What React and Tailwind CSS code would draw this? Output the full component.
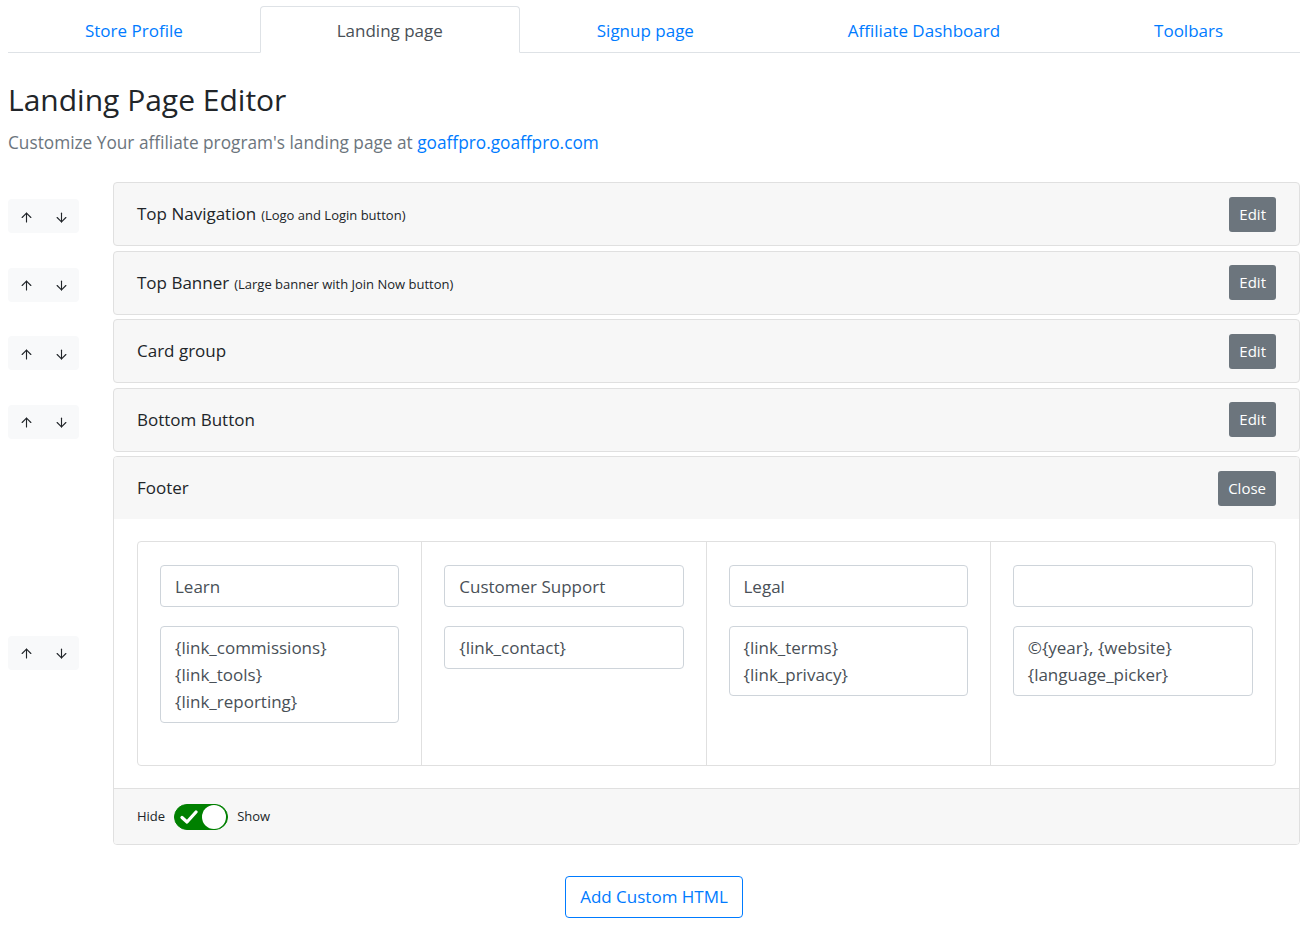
import React, { useState } from "react";
import { ArrowUp, ArrowDown } from "lucide-react";

const tabs = ["Store Profile", "Landing page", "Signup page", "Affiliate Dashboard", "Toolbars"];

const sections = [
  { title: "Top Navigation", note: "(Logo and Login button)" },
  { title: "Top Banner", note: "(Large banner with Join Now button)" },
  { title: "Card group" },
  { title: "Bottom Button" },
];

const columns = [
  { heading: "Learn", lines: ["{link_commissions}", "{link_tools}", "{link_reporting}"] },
  { heading: "Customer Support", lines: ["{link_contact}"] },
  { heading: "Legal", lines: ["{link_terms}", "{link_privacy}"] },
  { heading: "", lines: ["©{year}, {website}", "{language_picker}"] },
];

function MoveButtons() {
  return (
    <div className="w-[105px] shrink-0 pt-[4px]">
      <div className="inline-flex h-[34px] w-[71px] rounded bg-[#f8f9fa] text-[#212529]">
        <button className="flex w-1/2 items-center justify-center pl-[1px] pt-[2px]">
          <ArrowUp size={15} strokeWidth={1.8} />
        </button>
        <button className="flex w-1/2 items-center justify-center pt-[2px]">
          <ArrowDown size={15} strokeWidth={1.8} />
        </button>
      </div>
    </div>
  );
}

export default function App() {
  const [active] = useState(1);
  const [shown, setShown] = useState(true);

  return (
    <div className="min-h-screen bg-white px-2 text-[18px] text-[#212529]" style={{ fontFamily: "'Open Sans', 'Noto Sans', sans-serif" }}>
      {/* tabs */}
      <div className="mt-[6px] flex border-b border-[#dee2e6]">
        {tabs.map((t, i) => (
          <div
            key={t}
            className={
              i === active
                ? "-mb-px flex-auto rounded-t border border-[#dee2e6] border-b-white bg-white px-4 pb-[7px] pt-[11px] text-center text-[17px] leading-[26px] text-[#495057]"
                : "flex-auto border border-transparent px-4 pb-[7px] pt-[11px] text-center text-[17px] leading-[26px] text-[#007bff]"
            }
          >
            {t}
          </div>
        ))}
      </div>

      <h2 className="mt-[28px] text-[30px] leading-[38px] text-[#212529]">Landing Page Editor</h2>
      <p className="mt-[10px] text-[17.25px] leading-[27px] text-[#6c757d]">
        Customize Your affiliate program's landing page at{" "}
        <a className="text-[#007bff]">goaffpro.goaffpro.com</a>
      </p>

      <div className="mt-[26px] flex flex-col gap-[4.5px]">
        {sections.map((s) => (
          <div key={s.title} className="flex items-center">
            <MoveButtons />
            <div className="flex h-[64px] flex-1 items-center justify-between rounded border border-[#e0e0e0] bg-[#f7f7f7] pl-[23px] pr-[23px]">
              <div className="text-[17px]">
                {s.title}
                {s.note && <span className="ml-[5px] text-[13px]">{s.note}</span>}
              </div>
              <button className="h-[35px] rounded-[3px] bg-[#6c757d] px-[10px] text-[15px] text-white">Edit</button>
            </div>
          </div>
        ))}

        <div className="flex items-center">
          <MoveButtons />
          <div className="flex-1 overflow-hidden rounded border border-[#e0e0e0]">
            <div className="flex h-[62px] items-center justify-between bg-[#f7f7f7] pl-[23px] pr-[23px]">
              <div className="text-[17px]">Footer</div>
              <button className="h-[35px] rounded-[3px] bg-[#6c757d] px-[10px] text-[15px] text-white">Close</button>
            </div>
            <div className="bg-white px-[23px] pb-[22px] pt-[22px]">
              <div className="grid grid-cols-4 rounded border border-[#e0e0e0]">
                {columns.map((c, i) => (
                  <div
                    key={i}
                    className={
                      i < 3
                        ? "border-r border-[#e0e0e0] px-[22px] pb-[42px] pt-[23px]"
                        : "px-[22px] pb-[42px] pt-[23px]"
                    }
                  >
                    <div className="h-[42px] rounded border border-[#ced4da] px-[14px] py-[7px] text-[17px] leading-[27px] text-[#495057]">
                      {c.heading}
                    </div>
                    <div className="mt-[19px] rounded border border-[#ced4da] px-[14px] py-[7px] text-[17px] leading-[27px] text-[#495057]">
                      {c.lines.map((l) => (
                        <div key={l}>{l}</div>
                      ))}
                    </div>
                  </div>
                ))}
              </div>
            </div>
            <div className="flex h-[56px] items-center border-t border-[#e0e0e0] bg-[#f7f7f7] px-[23px] text-[13px]">
              <span>Hide</span>
              <button
                onClick={() => setShown(!shown)}
                className="mx-[9px] flex h-[26px] w-[54px] items-center justify-between rounded-full border border-[#008000] bg-[#008000] pl-[5px] pr-[1px]"
              >
                <svg width="18" height="14" viewBox="0 0 18 14">
                  <path d="M2 7.5 L7 12 L16 2" fill="none" stroke="white" strokeWidth="3.2" strokeLinecap="round" strokeLinejoin="round" />
                </svg>
                <span className="h-[24px] w-[24px] rounded-full bg-white" />
              </button>
              <span>Show</span>
            </div>
          </div>
        </div>
      </div>

      <div className="mt-[31px] flex justify-center">
        <button className="h-[42px] rounded border border-[#007bff] px-[14px] text-[17px] text-[#007bff]">Add Custom HTML</button>
      </div>
    </div>
  );
}
